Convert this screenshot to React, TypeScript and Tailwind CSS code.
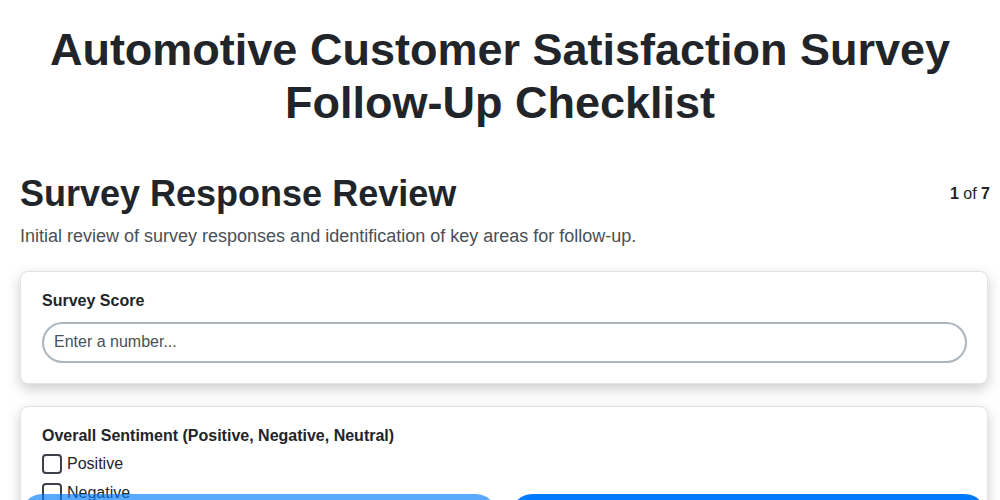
export default function App() {
  return (
    <div className="min-h-screen bg-white text-[#212529] font-['Liberation_Sans',Arial,sans-serif]">
      {/* Title */}
      <header className="px-5 pt-[23px]">
        <h1 className="text-center text-[45px] font-bold leading-[1.18]">
          Automotive Customer Satisfaction Survey Follow-Up Checklist
        </h1>
      </header>

      {/* Step */}
      <main className="pl-5 pr-[10px] pt-[43px] pb-24">
        <div className="flex items-center justify-between">
          <h2 className="text-[36px] font-bold leading-[1.2]">Survey Response Review</h2>
          <div className="text-base leading-[1.2]">
            <span className="font-bold">1</span> of <span className="font-bold">7</span>
          </div>
        </div>
        <p className="mt-2 text-[18px] leading-[1.5] text-[#495057]">
          Initial review of survey responses and identification of key areas for follow-up.
        </p>

        <div className="mt-[21px] mr-[2px] space-y-[22px]">
          {/* Score */}
          <div className="rounded-lg border border-[#e2e2ea] bg-white py-5 pl-[21px] pr-5 shadow-[0_5px_14px_rgba(0,0,0,0.2)]">
            <label className="block text-base font-bold leading-[1.2] -mt-px">Survey Score</label>
            <input
              type="number"
              placeholder="Enter a number..."
              className="mt-[11px] block h-[41px] w-full rounded-full border-2 border-[#adb5bd] px-[10px] text-base text-[#212529] outline-none placeholder:text-[#495057]"
            />
          </div>

          {/* Sentiment */}
          <div className="rounded-lg border border-[#e2e2ea] bg-white py-5 pl-[21px] pr-5 shadow-[0_5px_14px_rgba(0,0,0,0.2)]">
            <div className="text-base font-bold leading-[1.2] -mt-px">
              Overall Sentiment (Positive, Negative, Neutral)
            </div>
            <div className="mt-[9px] space-y-[9px]">
              {["Positive", "Negative", "Neutral"].map((opt) => (
                <label key={opt} className="flex items-center gap-[5px] text-base leading-[1.2]">
                  <span className="inline-block h-5 w-5 rounded-[4px] border-2 border-[#3b3f4a] bg-white" />
                  {opt}
                </label>
              ))}
            </div>
          </div>
        </div>
      </main>

      {/* Nav buttons */}
      <div className="fixed bottom-[-38px] left-[22px] right-[15px] flex gap-4">
        <button className="h-[44px] flex-1 rounded-[20px] bg-[#007bff] text-base font-bold text-white opacity-65">
          Previous
        </button>
        <button className="h-[44px] flex-1 rounded-[20px] bg-[#007bff] text-base font-bold text-white">
          Next
        </button>
      </div>
    </div>
  );
}
